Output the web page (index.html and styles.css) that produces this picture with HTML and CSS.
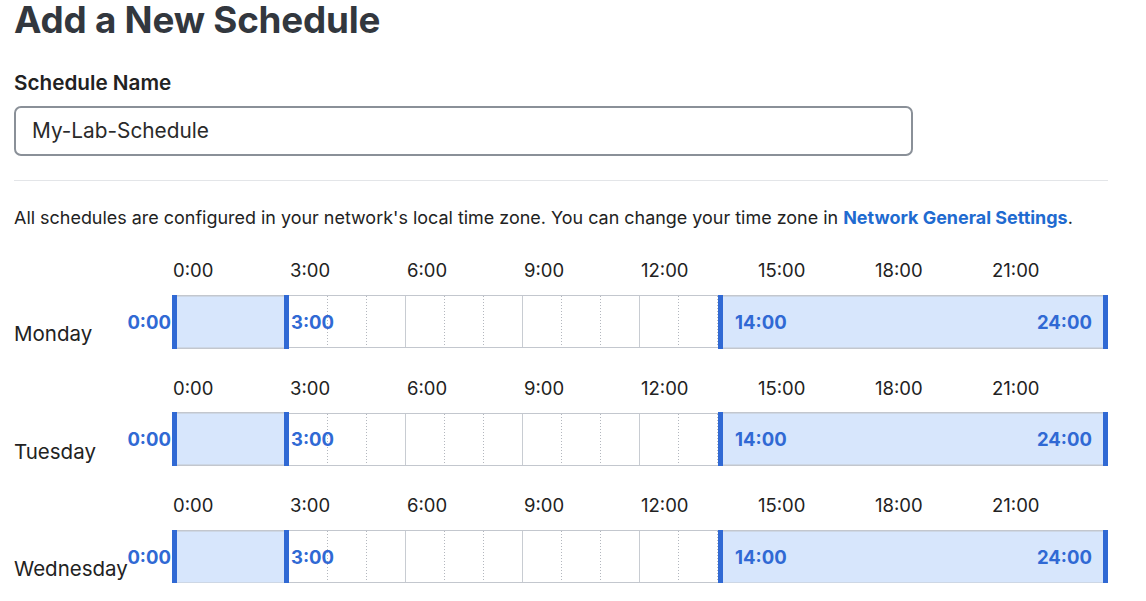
FILE: index.html
```html
<!DOCTYPE html>
<html>
<head>
<meta charset="utf-8">
<link rel="stylesheet" href="styles.css">
</head>
<body>
<div class="page">
  <h1 class="title">Add a New Schedule</h1>
  <label class="field-label">Schedule Name</label>
  <div class="input">My-Lab-Schedule</div>
  <hr class="divider">
  <p class="info">All schedules are configured in your network's local time zone. You can change your time zone in <a class="link">Network General Settings</a>.</p>

  <div class="day-row">
    <div class="day-name">Monday</div>
    <div class="timeline">
      <div class="ticks"><span>0:00</span><span>3:00</span><span>6:00</span><span>9:00</span><span>12:00</span><span>15:00</span><span>18:00</span><span>21:00</span></div>
      <div class="bar">
        <div class="seg"></div><div class="seg"></div><div class="seg"></div><div class="seg"></div><div class="seg"></div><div class="seg"></div><div class="seg"></div><div class="seg"></div>
        <div class="sel sel-a"><span class="tl out-left">0:00</span><span class="tl out-right">3:00</span></div>
        <div class="sel sel-b"><span class="tl in-left">14:00</span><span class="tl in-right">24:00</span></div>
      </div>
    </div>
  </div>

  <div class="day-row">
    <div class="day-name">Tuesday</div>
    <div class="timeline">
      <div class="ticks"><span>0:00</span><span>3:00</span><span>6:00</span><span>9:00</span><span>12:00</span><span>15:00</span><span>18:00</span><span>21:00</span></div>
      <div class="bar">
        <div class="seg"></div><div class="seg"></div><div class="seg"></div><div class="seg"></div><div class="seg"></div><div class="seg"></div><div class="seg"></div><div class="seg"></div>
        <div class="sel sel-a"><span class="tl out-left">0:00</span><span class="tl out-right">3:00</span></div>
        <div class="sel sel-b"><span class="tl in-left">14:00</span><span class="tl in-right">24:00</span></div>
      </div>
    </div>
  </div>

  <div class="day-row">
    <div class="day-name">Wednesday</div>
    <div class="timeline">
      <div class="ticks"><span>0:00</span><span>3:00</span><span>6:00</span><span>9:00</span><span>12:00</span><span>15:00</span><span>18:00</span><span>21:00</span></div>
      <div class="bar">
        <div class="seg"></div><div class="seg"></div><div class="seg"></div><div class="seg"></div><div class="seg"></div><div class="seg"></div><div class="seg"></div><div class="seg"></div>
        <div class="sel sel-a"><span class="tl out-left">0:00</span><span class="tl out-right">3:00</span></div>
        <div class="sel sel-b"><span class="tl in-left">14:00</span><span class="tl in-right">24:00</span></div>
      </div>
    </div>
  </div>
</div>
</body>
</html>
```

FILE: styles.css
```css
html, body {
  margin: 0;
  padding: 0;
  background: #ffffff;
}
body {
  font-family: Inter, "Liberation Sans", sans-serif;
  color: #222222;
  overflow: hidden;
}
.page {
  padding: 0 38px 0 14px;
}
.title {
  margin: 0;
  font-size: 36.8px;
  line-height: 40px;
  font-weight: 700;
  color: #32373e;
  letter-spacing: -0.2px;
}
.field-label {
  display: block;
  margin-top: 30px;
  font-size: 20.7px;
  line-height: 26px;
  font-weight: 600;
  color: #222;
}
.input {
  margin-top: 10px;
  width: 899px;
  height: 50px;
  box-sizing: border-box;
  border: 2.5px solid #8a9098;
  border-radius: 7px;
  padding: 0 16px;
  font-size: 20.8px;
  line-height: 45px;
  color: #2a2a2a;
}
.divider {
  margin: 24px 0 0 0;
  border: none;
  border-top: 1px solid #e3e5e8;
  width: 1094px;
}
.info {
  margin: 25px 0 0 0;
  font-size: 17.95px;
  line-height: 24px;
  color: #222;
}
.link {
  color: #1f6bd0;
  font-weight: 700;
}
.day-row {
  display: flex;
  align-items: flex-end;
  margin-top: 28px;
}
.day-row + .day-row {
  margin-top: 27.5px;
}
.day-name {
  width: 158px;
  flex: none;
  font-size: 20.5px;
  line-height: 24px;
  padding-bottom: 2px;
  color: #222;
  white-space: nowrap;
}
.timeline {
  width: 936px;
  flex: none;
}
.ticks {
  display: grid;
  grid-template-columns: repeat(8, 117px);
  height: 37px;
  font-size: 18.5px;
  line-height: 24px;
  color: #222;
}
.ticks span {
  padding-left: 1px;
}
.bar {
  position: relative;
  display: flex;
  height: 53px;
  box-sizing: border-box;
  border-top: 1.5px solid #c3c7ce;
  border-bottom: 1.5px solid #c3c7ce;
}
.seg {
  width: 117px;
  height: 100%;
  box-sizing: border-box;
  border-right: 1px solid #c8ccd2;
  background-image: linear-gradient(to bottom, #b3b7be 50%, transparent 50%), linear-gradient(to bottom, #b3b7be 50%, transparent 50%);
  background-size: 1px 3px, 1px 3px;
  background-position: 38px 0, 77px 0;
  background-repeat: repeat-y, repeat-y;
}
.sel {
  position: absolute;
  top: -1.5px;
  bottom: -1.5px;
  box-sizing: border-box;
  background: #d7e6fc;
  background-clip: padding-box;
  border-left: 5px solid #3069d4;
  border-right: 5px solid #3069d4;
  box-shadow: inset 0 1.5px 0 #c3c7ce, inset 0 -1.5px 0 #c3c7ce;
}
.sel-a {
  left: 0;
  width: 117px;
}
.sel-b {
  left: 546px;
  width: 390px;
}
.tl {
  position: absolute;
  top: 50%;
  transform: translateY(-50%);
  font-size: 18.5px;
  font-weight: 700;
  color: #3069d4;
  line-height: 20px;
  white-space: nowrap;
}
.out-left {
  right: 100%;
  margin-right: 6px;
}
.out-right {
  left: 100%;
  margin-left: 7px;
}
.in-left {
  left: 12px;
}
.in-right {
  right: 11px;
}
```
